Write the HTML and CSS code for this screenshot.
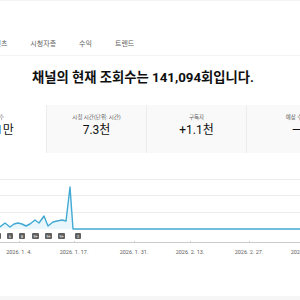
FILE: index.html
```html
<!DOCTYPE html>
<html lang="ko">
<head>
<meta charset="utf-8">
<link rel="stylesheet" href="styles.css">
</head>
<body>
<div class="page">
  <nav class="tabs">
    <span class="tab">콘텐츠</span>
    <span class="tab">시청자층</span>
    <span class="tab">수익</span>
    <span class="tab">트렌드</span>
  </nav>
  <h1 class="headline">채널의 현재 조회수는 141,094회입니다.</h1>
  <div class="cards">
    <div class="card selected">
      <div class="card-label">조회수</div>
      <div class="card-value">14.1만</div>
    </div>
    <div class="card">
      <div class="card-label">시청 시간(단위: 시간)</div>
      <div class="card-value">7.3천</div>
    </div>
    <div class="card">
      <div class="card-label">구독자</div>
      <div class="card-value">+1.1천</div>
    </div>
    <div class="card">
      <div class="card-label">예상 수익</div>
      <div class="card-value">—</div>
    </div>
  </div>
  <div class="chart">
    <svg class="chart-svg" width="300" height="100" viewBox="0 0 300 100">
      <g class="grid">
        <line x1="0" y1="20.5" x2="300" y2="20.5"/>
        <line x1="0" y1="36.5" x2="300" y2="36.5"/>
        <line x1="0" y1="53.5" x2="300" y2="53.5"/>
      </g>
      <polygon class="area" points="0,68 5,64 10,68 14,65 18,64 22,65 26,67 30,65 35,61 39,64 44,57 48,67 53,63 57,62 62,61 66,62 70,28 73,70 0,70"/>
      <polyline class="series" points="0,68 5,64 10,68 14,65 18,64 22,65 26,67 30,65 35,61 39,64 44,57 48,67 53,63 57,62 62,61 66,62 70,28 73,70 300,70"/>
      <g class="markers">
        <rect x="-5" y="74" width="6" height="6" rx="1"/>
        <rect x="7" y="74" width="6" height="6" rx="1"/>
        <rect x="19" y="74" width="6" height="6" rx="1"/>
        <rect x="32" y="74" width="7" height="6" rx="1"/>
        <rect x="45" y="74" width="7" height="6" rx="1"/>
        <rect x="58" y="74" width="7" height="6" rx="1"/>
        <rect x="75" y="74" width="6" height="6" rx="1"/>
      </g>
      <g class="marker-text">
        <text x="10" y="78.5">6</text>
        <text x="22" y="78.5">8</text>
        <text x="35.5" y="78.5">9+</text>
        <text x="48.5" y="78.5">9+</text>
        <text x="61.5" y="78.5">9+</text>
        <text x="78" y="78.5">3</text>
      </g>
      <line class="axis" x1="0" y1="83.5" x2="300" y2="83.5"/>
      <g class="ticks">
        <line x1="19.5" y1="82" x2="19.5" y2="83"/>
        <line x1="74.5" y1="82" x2="74.5" y2="83"/>
        <line x1="134.5" y1="82" x2="134.5" y2="83"/>
        <line x1="190.5" y1="82" x2="190.5" y2="83"/>
        <line x1="249.5" y1="82" x2="249.5" y2="83"/>
      </g>
      <g class="labels">
        <text x="19" y="95">2026. 1. 4.</text>
        <text x="74" y="95">2026. 1. 17.</text>
        <text x="134" y="95">2026. 1. 31.</text>
        <text x="190" y="95">2026. 2. 13.</text>
        <text x="249" y="95">2026. 2. 27.</text>
        <text x="305" y="95">2026. 3. 12.</text>
      </g>
    </svg>
  </div>
  <div class="footer-band"></div>
</div>
</body>
</html>
```
FILE: styles.css
```css
html, body {
  margin: 0;
  padding: 0;
  background: #ffffff;
}
body {
  width: 300px;
  height: 300px;
  overflow: hidden;
  font-family: Roboto, "Noto Sans CJK KR", sans-serif;
  color: #0f0f0f;
}
.page {
  display: flex;
  flex-direction: column;
  height: 300px;
  border-top: 1px solid #f4f4f4;
  box-sizing: border-box;
}
.tabs {
  display: flex;
  gap: 23px;
  margin-left: -12px;
  height: 55px;
  align-items: flex-end;
  padding-bottom: 6px;
  box-sizing: border-box;
  border-bottom: 1px solid #f3f3f3;
}
.tab {
  font-size: 7px;
  line-height: 10px;
  color: #606060;
  white-space: nowrap;
}
.headline {
  margin: 14px 0 0;
  padding-right: 14px;
  text-align: center;
  font-size: 13.3px;
  line-height: 16px;
  font-weight: 700;
  color: #0f0f0f;
  white-space: nowrap;
}
.cards {
  display: flex;
  margin: 19px 0 0 -53px;
  height: 48px;
}
.card {
  flex: 0 0 100px;
  box-sizing: border-box;
  background: #f9f9f9;
  border-left: 1px solid #ececec;
  display: flex;
  flex-direction: column;
  align-items: center;
  padding-top: 9px;
}
.card.selected {
  background: #ffffff;
  border-left: none;
  flex-basis: 99px;
}
.card-label {
  font-size: 5.5px;
  line-height: 7px;
  color: #606060;
  white-space: nowrap;
}
.card-value {
  font-size: 12px;
  line-height: 14px;
  margin-top: 2px;
  color: #0f0f0f;
  white-space: nowrap;
}
.chart {
  margin-top: 6px;
  height: 100px;
}
.chart-svg {
  display: block;
  overflow: visible;
}
.grid line {
  stroke: #ececec;
  stroke-width: 1;
}
.area {
  fill: #e9f6fb;
}
.series {
  fill: none;
  stroke: #41a9d3;
  stroke-width: 1.4;
  stroke-linejoin: round;
}
.markers rect {
  fill: #5f5f5f;
}
.marker-text text {
  font-family: Roboto, sans-serif;
  font-size: 3.6px;
  fill: #ffffff;
  text-anchor: middle;
}
.axis {
  stroke: #cccccc;
  stroke-width: 1;
}
.ticks line {
  stroke: #cccccc;
  stroke-width: 1;
}
.labels text {
  font-family: Roboto, sans-serif;
  font-size: 5.5px;
  fill: #606060;
  text-anchor: middle;
}
.footer-band {
  margin-top: auto;
  height: 4px;
  background: #f6f6f6;
}
```
